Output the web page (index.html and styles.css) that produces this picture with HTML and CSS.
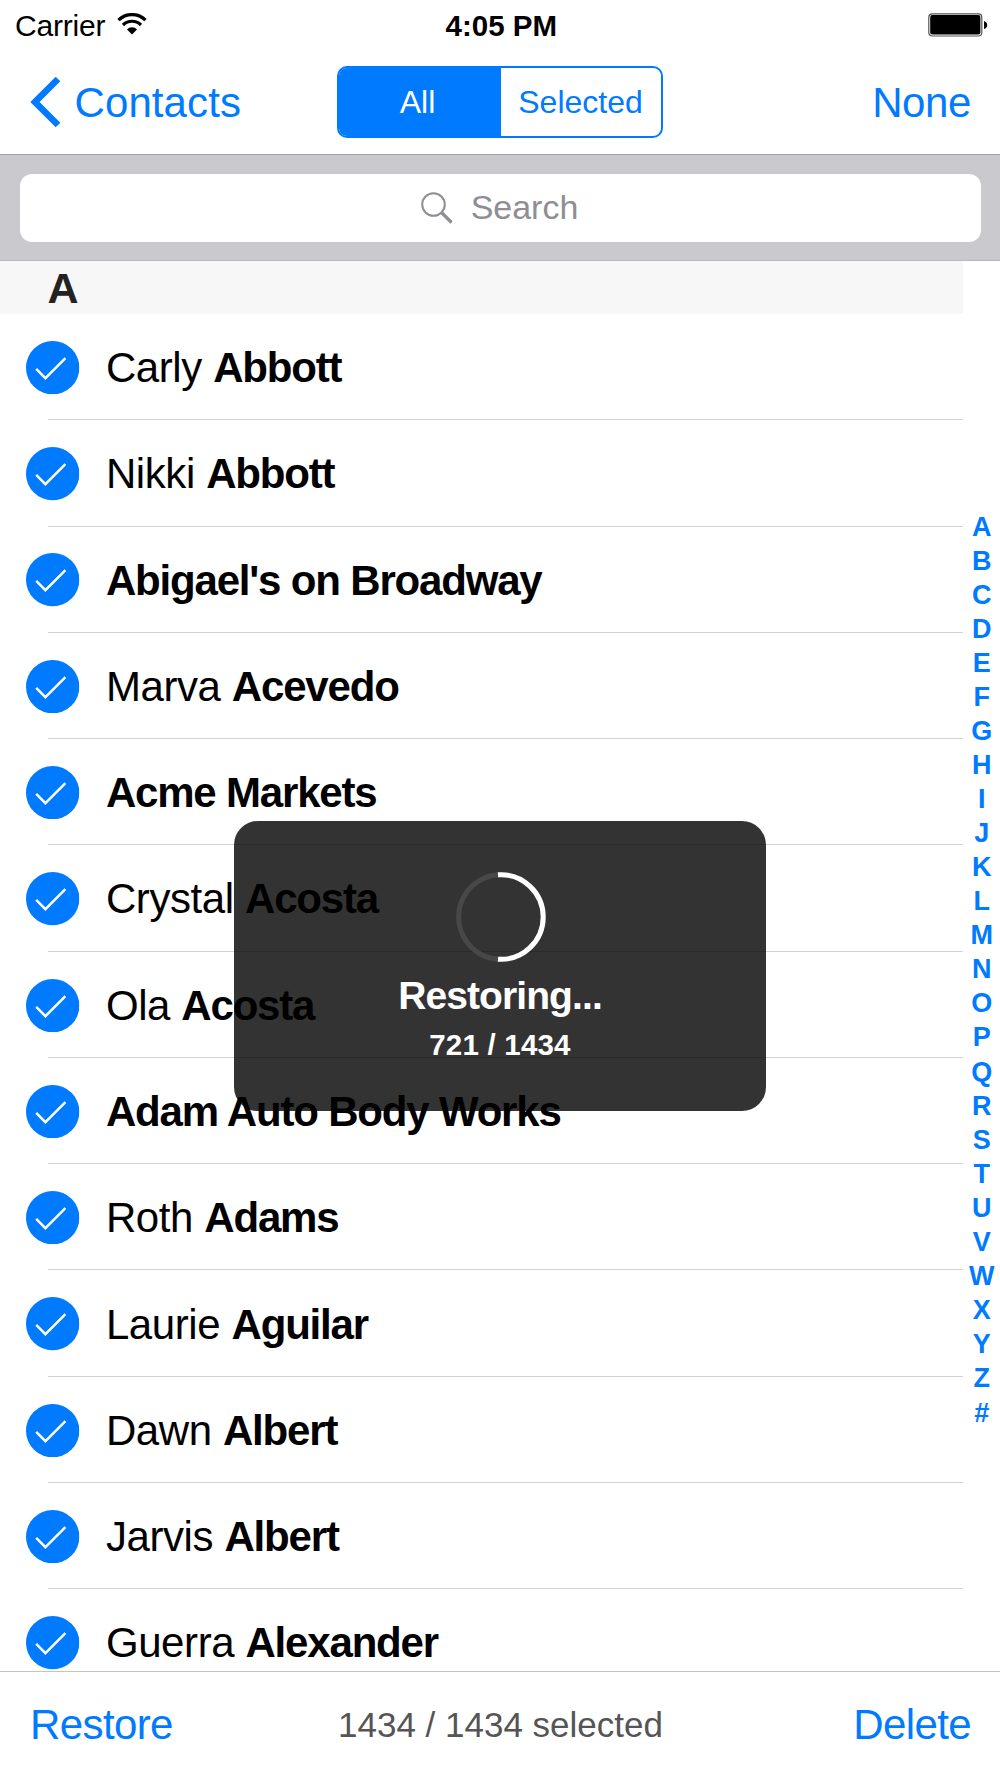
FILE: index.html
```
<!DOCTYPE html>
<html lang="en">
<head>
<meta charset="utf-8">
<title>Contacts</title>
<link rel="stylesheet" href="styles.css">
</head>
<body>
<svg class="defs" width="0" height="0" aria-hidden="true">
  <symbol id="check" viewBox="0 0 53.4 53.4">
    <circle cx="26.7" cy="26.7" r="26.7" fill="#007aff"/>
    <path d="M10.2 27.8 19.4 37.2 39.4 17.2" fill="none" stroke="#fff" stroke-width="2.5"/>
  </symbol>
</svg>
<div class="screen">
  <header class="header">
    <div class="status">
      <div class="status-left">
        <span class="carrier">Carrier</span>
        <svg class="wifi" width="30" height="22" viewBox="0 0 30 22">
          <path d="M1.5 7.2C9-.3 21-.3 28.500 7.200" fill="none" stroke="#000" stroke-width="3.300"/>
          <path d="M6 12C11.200 7 18.800 7 24 12" fill="none" stroke="#000" stroke-width="3.200"/>
          <path d="M10 16.400C12.800 13.600 17.200 13.600 20 16.400L15 21.600Z"/>
        </svg>
      </div>
      <span class="time">4:05 PM</span>
      <div class="status-right">
        <svg width="60" height="24" viewBox="0 0 60 24">
          <rect x=".8" y=".8" width="53" height="22.200" rx="3.500" fill="#fff" stroke="#555" stroke-width="1.200"/>
          <rect x="2.200" y="2" width="50.200" height="19.600" rx="2"/>
          <path d="M56 8Q59.200 9 59.200 12T56 16Z"/>
        </svg>
      </div>
    </div>
    <nav class="nav">
      <a class="back">
        <svg width="31" height="52" viewBox="0 0 31 52"><path d="M28 3 5 26 28 49" fill="none" stroke="#007aff" stroke-width="6.600"/></svg>
        <span>Contacts</span>
      </a>
      <div class="segments">
        <span class="segment segment-on">All</span>
        <span class="segment">Selected</span>
      </div>
      <a class="none">None</a>
    </nav>
  </header>
  <div class="search">
    <div class="field">
      <svg width="32" height="32" viewBox="0 0 32 32" fill="none" stroke="#8e8e93"><circle cx="12.500" cy="12.500" r="11.300" stroke-width="2"/><path d="M20.500 20.500 30.500 30.500" stroke-width="3.200"/></svg>
      <span>Search</span>
    </div>
  </div>
  <main class="main">
    <div class="list">
      <h2 class="section">A</h2>
      <div class="row"><svg class="check"><use href="#check"/></svg><p class="name">Carly <b>Abbott</b></p></div>
      <div class="row"><svg class="check"><use href="#check"/></svg><p class="name">Nikki <b>Abbott</b></p></div>
      <div class="row"><svg class="check"><use href="#check"/></svg><p class="name"><b>Abigael's on Broadway</b></p></div>
      <div class="row"><svg class="check"><use href="#check"/></svg><p class="name">Marva <b>Acevedo</b></p></div>
      <div class="row"><svg class="check"><use href="#check"/></svg><p class="name"><b>Acme Markets</b></p></div>
      <div class="row"><svg class="check"><use href="#check"/></svg><p class="name">Crystal <b>Acosta</b></p></div>
      <div class="row"><svg class="check"><use href="#check"/></svg><p class="name">Ola <b>Acosta</b></p></div>
      <div class="row"><svg class="check"><use href="#check"/></svg><p class="name"><b>Adam Auto Body Works</b></p></div>
      <div class="row"><svg class="check"><use href="#check"/></svg><p class="name">Roth <b>Adams</b></p></div>
      <div class="row"><svg class="check"><use href="#check"/></svg><p class="name">Laurie <b>Aguilar</b></p></div>
      <div class="row"><svg class="check"><use href="#check"/></svg><p class="name">Dawn <b>Albert</b></p></div>
      <div class="row"><svg class="check"><use href="#check"/></svg><p class="name">Jarvis <b>Albert</b></p></div>
      <div class="row"><svg class="check"><use href="#check"/></svg><p class="name">Guerra <b>Alexander</b></p></div>
    </div>
    <div class="index">
      <span>A</span><span>B</span><span>C</span><span>D</span><span>E</span><span>F</span><span>G</span><span>H</span><span>I</span><span>J</span><span>K</span><span>L</span><span>M</span><span>N</span><span>O</span><span>P</span><span>Q</span><span>R</span><span>S</span><span>T</span><span>U</span><span>V</span><span>W</span><span>X</span><span>Y</span><span>Z</span><span class="index-other">#</span>
    </div>
  </main>
  <footer class="toolbar">
    <a>Restore</a>
    <span class="count">1434 / 1434 selected</span>
    <a>Delete</a>
  </footer>
  <div class="hud">
    <svg class="ring" width="90" height="90" viewBox="0 0 90 90" fill="none" stroke-width="5">
      <circle cx="45" cy="45" r="42.300" stroke="#484848"/>
      <path d="M42 2.800A42.300 42.300 0 1 1 42 87.200" stroke="#fff"/>
    </svg>
    <strong class="hud-title">Restoring...</strong>
    <span class="hud-count">721 / 1434</span>
  </div>
</div>
</body>
</html>
```
FILE: styles.css
```
* { box-sizing: border-box; }
body { margin: 0; background: #fff; font-family: "Liberation Sans", Arial, sans-serif; color: #000; }
.defs { display: block; }
.screen { position: relative; display: flex; flex-direction: column; width: 1000px; height: 1778px; overflow: hidden; }

.header { height: 155px; border-bottom: 1px solid #a5a5a9; }
.status { display: grid; grid-template-columns: 1fr auto 1fr; align-items: center; height: 50px; padding: 0 12.500px 0 15px; font-size: 30px; }
.status-left { display: flex; align-items: center; gap: 12px; }
.carrier { padding-top: 1px; letter-spacing: -.2px; }
.wifi { margin-bottom: 2px; }
.time { padding-top: 1px; font-weight: 700; font-size: 29.5px; }
.status-right { display: flex; justify-content: flex-end; }

.nav { display: grid; grid-template-columns: 1fr 326px 1fr; align-items: center; height: 103px; padding: 0 29px 0 30px; font-size: 42px; color: #007aff; }
.back { display: flex; align-items: center; gap: 13.500px; letter-spacing: .1px; }
.back span, .none { padding-top: 2px; }
.none { text-align: right; letter-spacing: -.4px; }
.segments { display: grid; grid-template-columns: 162px 1fr; height: 72px; margin: 0 1px 0 -1px; border: 2.4px solid #007aff; border-radius: 10px; overflow: hidden; font-size: 32px; line-height: 69px; text-align: center; }
.segment-on { padding-right: 4px; background: #007aff; color: #fff; }

.search { height: 106px; padding: 19px 19.5px 0; background: #c9c9ce; border-bottom: 1px solid #b8b8bc; }
.field { display: flex; align-items: center; justify-content: center; gap: 18px; height: 67.500px; padding-right: 1px; border-radius: 12px; background: #fff; color: #8e8e93; font-size: 34px; }
.field span { margin-top: -1px; }

.main { display: flex; height: 1409.500px; overflow: hidden; }
.list { width: 963.400px; }
.section { height: 53px; margin: 0; padding-left: 47.500px; background: #f7f7f7; color: #222; font-size: 43px; line-height: 55px; }
.row { display: flex; align-items: center; height: 106.280px; padding-left: 26.300px; background: linear-gradient(#d2d2d5, #d2d2d5) 48px 100% / 100% 1px no-repeat; }
.check { width: 53.400px; height: 53.400px; margin: 1px 26.200px 0 0; }
.name { margin: 0; padding-top: 2px; font-size: 42px; letter-spacing: -.4px; white-space: nowrap; }
.name b { letter-spacing: -1.180px; }
.index { display: flex; flex-direction: column; width: 36.500px; padding-top: 249px; text-align: center; font-size: 27px; font-weight: 700; line-height: 34.030px; color: #007aff; }
.index-other { padding-top: 1px; }

.toolbar { display: grid; grid-template-columns: 1fr auto 1fr; align-items: center; height: 107.500px; padding: 0 29px 0 30px; border-top: 1px solid #c4c4c4; background: #fff; color: #007aff; font-size: 42px; letter-spacing: -.6px; }
.toolbar a { padding-top: 1px; }
.toolbar a:last-child { text-align: right; }
.count { padding-top: 1px; font-size: 35px; letter-spacing: 0; color: #555; }

.hud { position: absolute; left: 234.300px; top: 821.300px; display: flex; flex-direction: column; align-items: center; width: 531.400px; height: 290px; padding-top: 50.500px; border-radius: 24px; background: rgba(0, 0, 0, .8); color: #fff; }
.ring { margin-left: 2px; }
.hud-title { margin-top: 13px; font-size: 39px; line-height: 42px; letter-spacing: -.9px; }
.hud-count { margin-top: 11px; font-size: 29.500px; font-weight: 700; line-height: 34px; letter-spacing: .2px; }
```
